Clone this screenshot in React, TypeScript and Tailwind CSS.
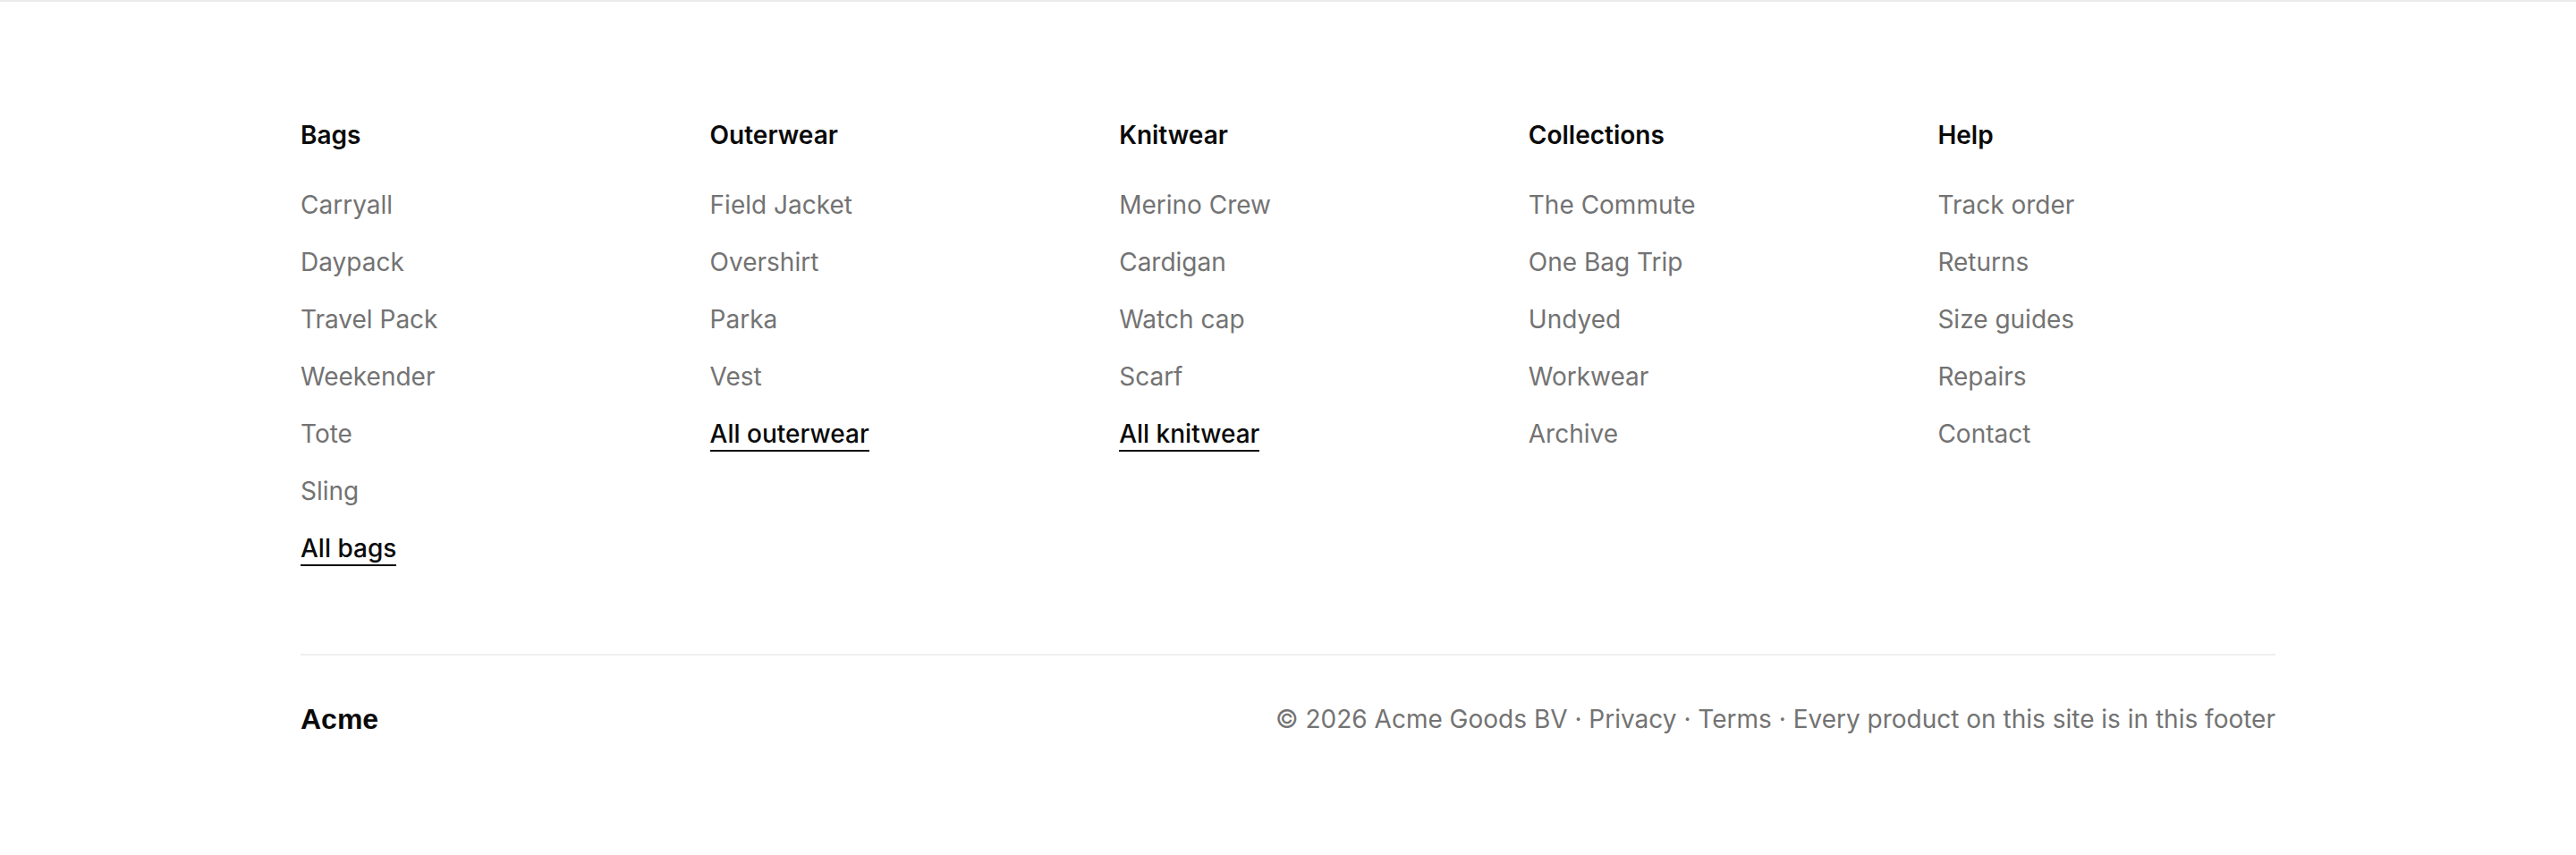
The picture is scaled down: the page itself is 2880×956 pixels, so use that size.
const columns = [
  {
    title: 'Bags',
    links: ['Carryall', 'Daypack', 'Travel Pack', 'Weekender', 'Tote', 'Sling'],
    all: 'All bags',
  },
  {
    title: 'Outerwear',
    links: ['Field Jacket', 'Overshirt', 'Parka', 'Vest'],
    all: 'All outerwear',
  },
  {
    title: 'Knitwear',
    links: ['Merino Crew', 'Cardigan', 'Watch cap', 'Scarf'],
    all: 'All knitwear',
  },
  {
    title: 'Collections',
    links: ['The Commute', 'One Bag Trip', 'Undyed', 'Workwear', 'Archive'],
  },
  {
    title: 'Help',
    links: ['Track order', 'Returns', 'Size guides', 'Repairs', 'Contact'],
  },
];

export default function App() {
  return (
    <footer className="min-h-[956px] bg-white border-t-2 border-[#ececec] font-['Inter',sans-serif]">
      <div className="mx-auto max-w-[2208px] pt-[131px] pb-[80px]">
        <div className="grid grid-cols-5 gap-x-[80px]">
          {columns.map((col) => (
            <div key={col.title}>
              <h3 className="text-[28px] leading-[36px] font-semibold text-[#0a0a0a]">
                {col.title}
              </h3>
              <ul className="mt-[40px] flex flex-col gap-[24px]">
                {col.links.map((link) => (
                  <li key={link} className="text-[28px] leading-[40px] text-[#737373]">
                    <a href="#">{link}</a>
                  </li>
                ))}
                {col.all && (
                  <li className="text-[28px] leading-[40px] font-medium text-[#0a0a0a]">
                    <a href="#" className="border-b-2 border-[#0a0a0a] pb-[1px]">
                      {col.all}
                    </a>
                  </li>
                )}
              </ul>
            </div>
          ))}
        </div>

        <div className="mt-[98px] border-t-2 border-[#efefef] pt-[51px] flex items-center justify-between">
          <span className="text-[32px] leading-[40px] font-bold text-[#0a0a0a] font-['Liberation_Sans',Arial,sans-serif]">
            Acme
          </span>
          <p className="text-[28px] leading-[40px] text-[#737373]">
            © 2026 Acme Goods BV · <a href="#">Privacy</a> · <a href="#">Terms</a> · Every product on this site is in this footer
          </p>
        </div>
      </div>
    </footer>
  );
}
